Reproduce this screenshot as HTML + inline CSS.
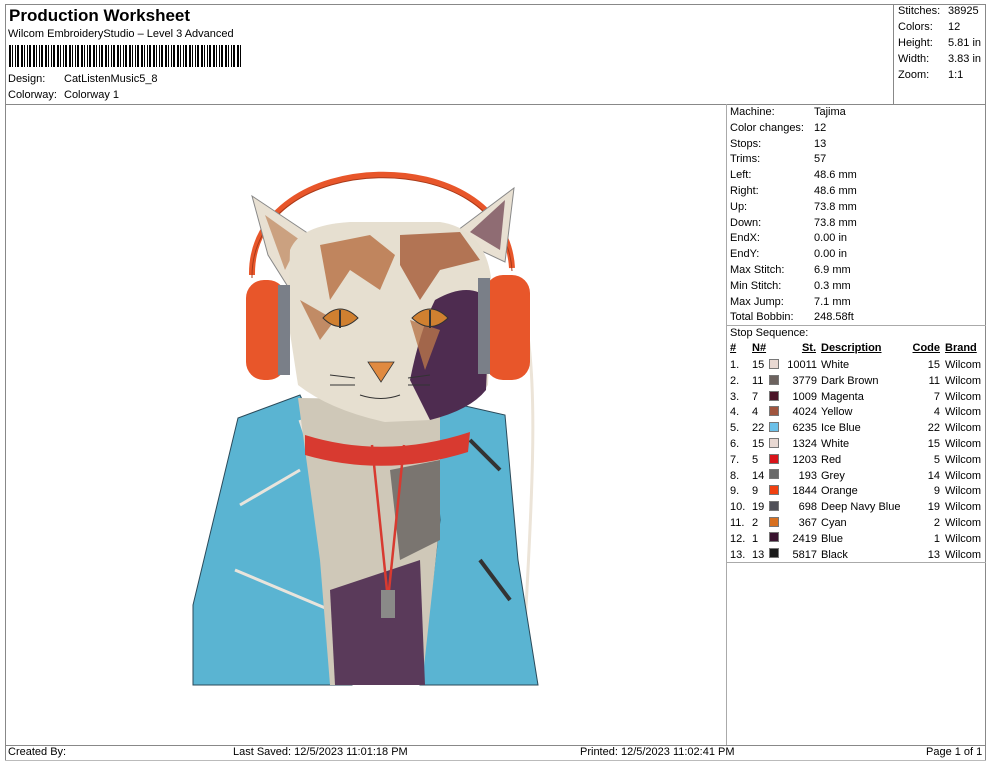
<!DOCTYPE html>
<html><head><meta charset="utf-8"><style>
*{margin:0;padding:0;box-sizing:border-box}
body{width:990px;height:762px;background:#fff;font-family:"Liberation Sans",Arial,sans-serif;color:#000;position:relative;overflow:hidden}
.a{position:absolute;white-space:nowrap}
.t{font-size:11px;line-height:13px}
.ln{position:absolute;background:#888}
.sw{position:absolute;width:10px;height:10px;border:1px solid #777}
u{text-decoration:underline}
</style></head><body>
<div class="ln" style="left:5px;top:4px;width:981px;height:1px"></div>
<div class="ln" style="left:5px;top:4px;width:1px;height:757px"></div>
<div class="ln" style="left:985px;top:4px;width:1px;height:757px"></div>
<div class="ln" style="left:5px;top:104px;width:981px;height:1px"></div>
<div class="ln" style="left:893px;top:4px;width:1px;height:100px"></div>
<div class="ln" style="left:726px;top:104px;width:1px;height:641px;background:#aaa"></div>
<div class="ln" style="left:726px;top:325px;width:260px;height:1px;background:#aaa"></div>
<div class="ln" style="left:726px;top:562px;width:260px;height:1px;background:#aaa"></div>
<div class="ln" style="left:5px;top:745px;width:981px;height:1px"></div>
<div class="ln" style="left:5px;top:760px;width:981px;height:1px;background:#bbb"></div>

<div class="a" style="left:9px;top:6px;font-size:17px;font-weight:bold">Production Worksheet</div>
<div class="a t" style="left:8px;top:28px">Wilcom EmbroideryStudio – Level 3 Advanced</div>
<div class="a" style="left:9px;top:45px;width:232px;height:22px;background:repeating-linear-gradient(90deg,#000 0 2px,#fff 2px 3px,#000 3px 4px,#fff 4px 6px,#000 6px 7px,#fff 7px 8px,#000 8px 10px,#fff 10px 12px)"></div>
<div class="a t" style="left:8px;top:73px">Design:</div>
<div class="a t" style="left:64px;top:73px">CatListenMusic5_8</div>
<div class="a t" style="left:8px;top:89px">Colorway:</div>
<div class="a t" style="left:64px;top:89px">Colorway 1</div>

<div class="a t" style="left:898px;top:5px">Stitches:</div><div class="a t" style="left:948px;top:5px">38925</div>
<div class="a t" style="left:898px;top:21px">Colors:</div><div class="a t" style="left:948px;top:21px">12</div>
<div class="a t" style="left:898px;top:37px">Height:</div><div class="a t" style="left:948px;top:37px">5.81 in</div>
<div class="a t" style="left:898px;top:53px">Width:</div><div class="a t" style="left:948px;top:53px">3.83 in</div>
<div class="a t" style="left:898px;top:69px">Zoom:</div><div class="a t" style="left:948px;top:69px">1:1</div>

<div class="a t" style="left:730px;top:105px;line-height:15.8px">Machine:<br>Color changes:<br>Stops:<br>Trims:<br>Left:<br>Right:<br>Up:<br>Down:<br>EndX:<br>EndY:<br>Max Stitch:<br>Min Stitch:<br>Max Jump:<br>Total Bobbin:<br>Stop Sequence:</div>
<div class="a t" style="left:814px;top:105px;line-height:15.8px">Tajima<br>12<br>13<br>57<br>48.6 mm<br>48.6 mm<br>73.8 mm<br>73.8 mm<br>0.00 in<br>0.00 in<br>6.9 mm<br>0.3 mm<br>7.1 mm<br>248.58ft</div>

<div class="a t" style="left:730px;top:342px;font-weight:bold"><u>#</u></div>
<div class="a t" style="left:752px;top:342px;font-weight:bold"><u>N#</u></div>
<div class="a t" style="left:795px;top:342px;font-weight:bold;width:21px;text-align:right"><u>St.</u></div>
<div class="a t" style="left:821px;top:342px;font-weight:bold"><u>Description</u></div>
<div class="a t" style="left:905px;top:342px;font-weight:bold;width:35px;text-align:right"><u>Code</u></div>
<div class="a t" style="left:945px;top:342px;font-weight:bold"><u>Brand</u></div>

<div class="a t" style="left:730px;top:358px;line-height:15.8px">1.<br>2.<br>3.<br>4.<br>5.<br>6.<br>7.<br>8.<br>9.<br>10.<br>11.<br>12.<br>13.</div>
<div class="a t" style="left:752px;top:358px;line-height:15.8px">15<br>11<br>7<br>4<br>22<br>15<br>5<br>14<br>9<br>19<br>2<br>1<br>13</div>
<div class="a t" style="left:780px;top:358px;line-height:15.8px;width:37px;text-align:right">10011<br>3779<br>1009<br>4024<br>6235<br>1324<br>1203<br>193<br>1844<br>698<br>367<br>2419<br>5817</div>
<div class="a t" style="left:821px;top:358px;line-height:15.8px">White<br>Dark Brown<br>Magenta<br>Yellow<br>Ice Blue<br>White<br>Red<br>Grey<br>Orange<br>Deep Navy Blue<br>Cyan<br>Blue<br>Black</div>
<div class="a t" style="left:905px;top:358px;line-height:15.8px;width:35px;text-align:right">15<br>11<br>7<br>4<br>22<br>15<br>5<br>14<br>9<br>19<br>2<br>1<br>13</div>
<div class="a t" style="left:945px;top:358px;line-height:15.8px">Wilcom<br>Wilcom<br>Wilcom<br>Wilcom<br>Wilcom<br>Wilcom<br>Wilcom<br>Wilcom<br>Wilcom<br>Wilcom<br>Wilcom<br>Wilcom<br>Wilcom</div>

<div class="sw" style="left:769px;top:359px;background:#e8d8d2"></div>
<div class="sw" style="left:769px;top:375px;background:#6c625e"></div>
<div class="sw" style="left:769px;top:391px;background:#4a1428"></div>
<div class="sw" style="left:769px;top:406px;background:#a0553e"></div>
<div class="sw" style="left:769px;top:422px;background:#6cc0e8"></div>
<div class="sw" style="left:769px;top:438px;background:#e8d8d2"></div>
<div class="sw" style="left:769px;top:454px;background:#d8141a"></div>
<div class="sw" style="left:769px;top:469px;background:#6a6a6a"></div>
<div class="sw" style="left:769px;top:485px;background:#f04010"></div>
<div class="sw" style="left:769px;top:501px;background:#505058"></div>
<div class="sw" style="left:769px;top:517px;background:#d87020"></div>
<div class="sw" style="left:769px;top:532px;background:#3a1430"></div>
<div class="sw" style="left:769px;top:548px;background:#1a1a1a"></div>

<div class="a t" style="left:8px;top:746px">Created By:</div>
<div class="a t" style="left:233px;top:746px">Last Saved: 12/5/2023 11:01:18 PM</div>
<div class="a t" style="left:580px;top:746px">Printed: 12/5/2023 11:02:41 PM</div>
<div class="a t" style="left:926px;top:746px">Page 1 of 1</div>

<svg class="a" style="left:0;top:0" width="990" height="762">
<path d="M252 275 C250 145 505 140 512 268" fill="none" stroke="#e8562a" stroke-width="6"/>
<path d="M252 275 C250 145 505 140 512 268" fill="none" stroke="#a83a1a" stroke-width="1" transform="translate(0,3)"/>
<path d="M527 330 C538 400 532 500 522 680" fill="none" stroke="#ece4d8" stroke-width="3"/>
<!-- jackets -->
<path d="M193 605 L238 418 L300 395 L335 470 L352 685 L193 685Z" fill="#5ab4d2" stroke="#2a4a5a"/>
<path d="M430 398 L505 415 L518 560 L538 685 L420 685 L440 520Z" fill="#5ab4d2" stroke="#2a4a5a"/>
<path d="M240 505 L300 470 M235 570 L330 610 M300 420 L340 540" stroke="#e8e4dc" stroke-width="3" fill="none"/>
<path d="M470 440 L500 470 M480 560 L510 600" stroke="#333" stroke-width="4" fill="none"/>
<!-- chest -->
<path d="M298 398 L440 400 L440 520 L422 685 L330 685 L320 560 Z" fill="#cfc8b8"/>
<path d="M330 590 L420 560 L425 685 L335 685Z" fill="#5a3a5a"/>
<path d="M390 470 L440 460 L440 540 L400 560Z" fill="#7a7570"/>
<!-- ears -->
<path d="M252 196 L318 240 L290 290 L268 255Z" fill="#e8e0d2" stroke="#888"/>
<path d="M514 188 L505 262 L450 236Z" fill="#e8e0d2" stroke="#888"/>
<path d="M265 215 L300 240 L285 270Z" fill="#b8764a" opacity=".6"/>
<path d="M505 200 L500 250 L470 232Z" fill="#6a3a4a" opacity=".7"/>
<!-- head -->
<path d="M290 250 Q300 225 350 222 L440 222 Q490 230 492 290 L488 385 Q470 410 430 420 L385 422 Q330 410 298 385 L288 320Z" fill="#e6dfd0"/>
<path d="M435 300 Q470 280 490 300 L486 390 Q470 410 430 420 L410 380 Q420 330 435 300Z" fill="#4e2c50"/>
<path d="M320 245 L370 235 L395 255 L380 290 L350 270 L330 300 Z" fill="#b8764a" opacity=".85"/>
<path d="M400 235 L460 232 L480 260 L440 270 L420 300 L400 265Z" fill="#a8623e" opacity=".85"/>
<path d="M300 300 L335 320 L320 340 Z M410 320 L440 330 L425 370Z" fill="#b8764a" opacity=".8"/>
<path d="M323 318 Q340 300 358 318 Q340 335 323 318Z M412 318 Q430 300 448 318 Q430 335 412 318Z" fill="#d08030" stroke="#333"/>
<path d="M340 310 L340 328 M430 310 L430 328" stroke="#333" stroke-width="2"/>
<path d="M368 362 L394 362 L381 382Z" fill="#e08a40" stroke="#333" stroke-width=".8"/>
<path d="M360 395 Q381 402 400 395 M330 375 L355 378 M330 385 L355 385 M408 378 L430 375 M408 385 L430 385" stroke="#333" fill="none"/>
<path d="M305 435 Q385 460 470 432 L468 452 Q385 478 305 455Z" fill="#d83a30"/>
<path d="M372 445 L388 600 L404 445" fill="none" stroke="#d83a30" stroke-width="2.5"/>
<rect x="381" y="590" width="14" height="28" fill="#8a8a88"/>
<!-- earcups -->
<rect x="246" y="280" width="40" height="100" rx="18" fill="#e8562a"/>
<rect x="278" y="285" width="12" height="90" fill="#7a7f88"/>
<rect x="485" y="275" width="45" height="105" rx="18" fill="#e8562a"/>
<rect x="478" y="278" width="12" height="96" fill="#7a7f88"/>
</svg>
</body></html>
